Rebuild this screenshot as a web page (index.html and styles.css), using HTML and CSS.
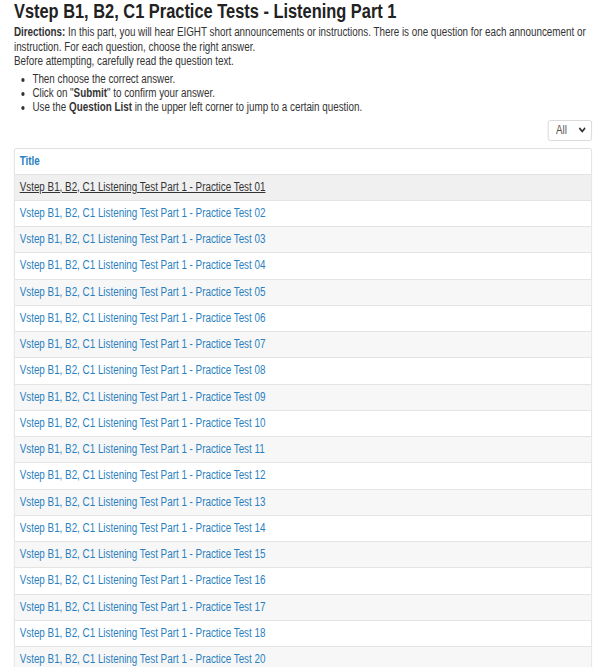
FILE: index.html
```html
<!DOCTYPE html>
<html lang="en">
<head>
<meta charset="utf-8">
<title>Vstep B1, B2, C1 Practice Tests - Listening Part 1</title>
<link rel="stylesheet" href="styles.css">
</head>
<body>
<main class="page">
  <h1 class="page-title">Vstep B1, B2, C1 Practice Tests - Listening Part 1</h1>
  <p class="directions"><strong>Directions:</strong> In this part, you will hear EIGHT short announcements or instructions. There is one question for each announcement or instruction. For each question, choose the right answer.<br>Before attempting, carefully read the question text.</p>
  <ul class="steps">
    <li>Then choose the correct answer.</li>
    <li>Click on "<strong>Submit</strong>" to confirm your answer.</li>
    <li>Use the <strong>Question List</strong> in the upper left corner to jump to a certain question.</li>
  </ul>
  <div class="filter-bar">
    <div class="select">
      <span class="select-value">All</span>
      <svg class="select-caret" width="10" height="8" viewBox="0 0 10 8"><path d="M1.5 2 L5 5.5 L8.5 2" fill="none" stroke="#333" stroke-width="1.8"/></svg>
    </div>
  </div>
  <div class="test-table">
    <div class="row head">Title</div>
    <div class="row odd hover"><a href="#">Vstep B1, B2, C1 Listening Test Part 1 - Practice Test 01</a></div>
    <div class="row"><a href="#">Vstep B1, B2, C1 Listening Test Part 1 - Practice Test 02</a></div>
    <div class="row odd"><a href="#">Vstep B1, B2, C1 Listening Test Part 1 - Practice Test 03</a></div>
    <div class="row"><a href="#">Vstep B1, B2, C1 Listening Test Part 1 - Practice Test 04</a></div>
    <div class="row odd"><a href="#">Vstep B1, B2, C1 Listening Test Part 1 - Practice Test 05</a></div>
    <div class="row"><a href="#">Vstep B1, B2, C1 Listening Test Part 1 - Practice Test 06</a></div>
    <div class="row odd"><a href="#">Vstep B1, B2, C1 Listening Test Part 1 - Practice Test 07</a></div>
    <div class="row"><a href="#">Vstep B1, B2, C1 Listening Test Part 1 - Practice Test 08</a></div>
    <div class="row odd"><a href="#">Vstep B1, B2, C1 Listening Test Part 1 - Practice Test 09</a></div>
    <div class="row"><a href="#">Vstep B1, B2, C1 Listening Test Part 1 - Practice Test 10</a></div>
    <div class="row odd"><a href="#">Vstep B1, B2, C1 Listening Test Part 1 - Practice Test 11</a></div>
    <div class="row"><a href="#">Vstep B1, B2, C1 Listening Test Part 1 - Practice Test 12</a></div>
    <div class="row odd"><a href="#">Vstep B1, B2, C1 Listening Test Part 1 - Practice Test 13</a></div>
    <div class="row"><a href="#">Vstep B1, B2, C1 Listening Test Part 1 - Practice Test 14</a></div>
    <div class="row odd"><a href="#">Vstep B1, B2, C1 Listening Test Part 1 - Practice Test 15</a></div>
    <div class="row"><a href="#">Vstep B1, B2, C1 Listening Test Part 1 - Practice Test 16</a></div>
    <div class="row odd"><a href="#">Vstep B1, B2, C1 Listening Test Part 1 - Practice Test 17</a></div>
    <div class="row"><a href="#">Vstep B1, B2, C1 Listening Test Part 1 - Practice Test 18</a></div>
    <div class="row odd"><a href="#">Vstep B1, B2, C1 Listening Test Part 1 - Practice Test 20</a></div>
  </div>
</main>
</body>
</html>
```
FILE: styles.css
```css
html, body {
  margin: 0;
  padding: 0;
  background: #fff;
  overflow: hidden;
}

body {
  font-family: "Liberation Sans", Arial, sans-serif;
  font-size: 12px;
  color: #333;
}

/* The page is set at a wider measure and condensed horizontally,
   which gives the narrow Arial-like face of the original layout. */
.page {
  box-sizing: border-box;
  width: 731px;
  padding: 0 9px 0 17px;
  transform: scaleX(0.82);
  transform-origin: 0 0;
}

.page-title {
  margin: 0 0 3px;
  font-size: 20px;
  line-height: 22px;
  font-weight: bold;
  color: #222;
}

.directions {
  margin: 0;
  line-height: 14.5px;
}

.steps {
  margin: 3px 0 0;
  padding-left: 22.5px;
  line-height: 14px;
}

.filter-bar {
  display: flex;
  justify-content: flex-end;
  margin-top: 6px;
}

.select {
  width: 54px;
  height: 21px;
  box-sizing: border-box;
  border: 1px solid #d6d6d6;
  border-radius: 3px;
  display: flex;
  align-items: center;
  justify-content: space-between;
  padding: 0 6px 0 9px;
  color: #555;
}

.test-table {
  margin-top: 7px;
  border: 1px solid #ddd;
  border-radius: 3px;
}

.row {
  padding: 5px 6px;
  line-height: 15.25px;
  border-top: 1px solid #e4e4e4;
}

.row.head {
  border-top: 0;
  line-height: 15px;
  color: #2a7fc0;
  font-weight: bold;
}

.row.odd {
  background: #f7f7f7;
}

.row.hover {
  background: #f0f0f0;
}

.row a {
  color: #2a7fc0;
  text-decoration: none;
}

.row.hover a {
  color: #333;
  text-decoration: underline;
}
```
